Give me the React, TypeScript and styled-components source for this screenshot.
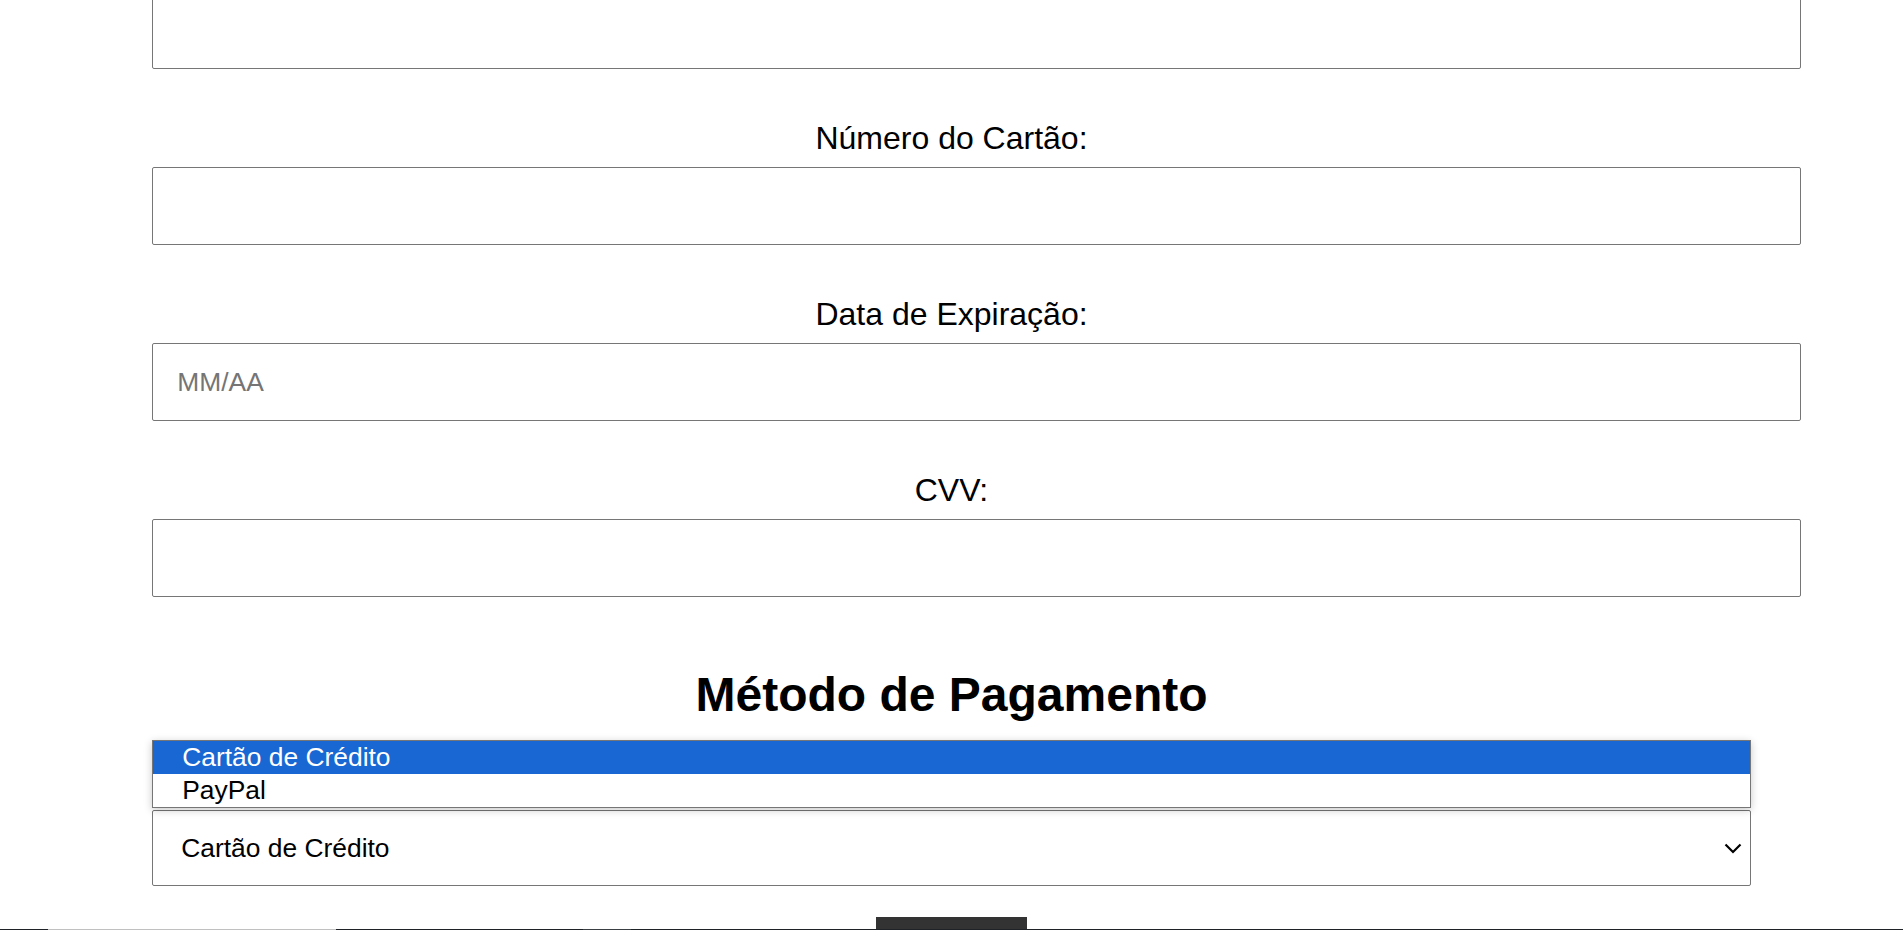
import React from "react";
import styled, { createGlobalStyle } from "styled-components";

const GlobalStyle = createGlobalStyle`
  html, body {
    margin: 0;
    padding: 0;
    background: #ffffff;
    overflow: hidden;
  }
  body {
    font-family: "Liberation Sans", Arial, sans-serif;
    color: #000000;
  }
`;

const Page = styled.div`
  height: 930px;
  overflow: hidden;
`;

const Form = styled.form`
  width: 84%;
  margin: 0 auto;
`;

const Field = styled.div<{ $first?: boolean }>`
  display: flex;
  flex-direction: column;
  margin-top: ${(p) => (p.$first ? "-9px" : "0")};
  margin-bottom: 51px;
`;

const Label = styled.label`
  display: block;
  text-align: center;
  font-size: 32px;
  line-height: 37px;
  margin-bottom: 10px;
`;

const Input = styled.input`
  box-sizing: content-box;
  width: 100%;
  height: 76px;
  padding: 0 24px;
  border: 1px solid #767676;
  border-radius: 2px;
  font-family: "Liberation Sans", Arial, sans-serif;
  font-size: 26.4px;
  color: #000;
  background: #fff;
  outline: none;

  &::placeholder {
    color: #757575;
  }
`;

const Heading = styled.h2`
  margin: 70px 0 88px;
  text-align: center;
  font-size: 48px;
  line-height: 55px;
  font-weight: 700;
`;

const SelectWrap = styled.div`
  position: relative;
`;

const Select = styled.select`
  display: block;
  width: 100%;
  height: 76px;
  padding: 0 24px 0 28px;
  border: 1px solid #767676;
  border-radius: 2px;
  font-family: "Liberation Sans", Arial, sans-serif;
  font-size: 26.4px;
  color: #000;
  background: #fff;
  outline: none;
  appearance: none;
  -webkit-appearance: none;
`;

const Chevron = styled.svg`
  position: absolute;
  right: 9px;
  top: 50%;
  width: 18px;
  height: 11px;
  margin-top: -5px;
  pointer-events: none;
`;

const Popup = styled.div`
  position: absolute;
  left: 0;
  right: 0;
  bottom: calc(100% + 2px);
  border: 1px solid #767676;
  background: #fff;
  box-shadow: 0 2px 8px rgba(0, 0, 0, 0.22);
  display: flex;
  flex-direction: column;
`;

const Option = styled.div<{ $active?: boolean }>`
  height: 33px;
  line-height: 33px;
  padding-left: 29px;
  font-size: 26.4px;
  background: ${(p) => (p.$active ? "#1967d2" : "#ffffff")};
  color: ${(p) => (p.$active ? "#ffffff" : "#000000")};
  white-space: nowrap;
`;

const Submit = styled.button`
  display: block;
  margin: 31px auto 0;
  width: 151px;
  height: 100px;
  padding: 0;
  border: none;
  background: #333333;
  color: #fff;
  font-family: "Liberation Sans", Arial, sans-serif;
  font-size: 20px;
`;

const Taskbar = styled.div`
  position: fixed;
  left: 0;
  right: 0;
  bottom: 0;
  height: 1px;
  display: flex;
  background: #1f2328;
`;

const TaskSeg = styled.div<{ $w: number; $c: string }>`
  width: ${(p) => p.$w}px;
  background: ${(p) => p.$c};
`;

export default function App() {
  return (
    <Page>
      <GlobalStyle />
      <Form onSubmit={(e) => e.preventDefault()}>
        <Field $first>
          <Input type="text" aria-label="Nome no Cartão" />
        </Field>
        <Field>
          <Label htmlFor="numero">Número do Cartão:</Label>
          <Input id="numero" type="text" />
        </Field>
        <Field>
          <Label htmlFor="validade">Data de Expiração:</Label>
          <Input id="validade" type="text" placeholder="MM/AA" />
        </Field>
        <Field>
          <Label htmlFor="cvv">CVV:</Label>
          <Input id="cvv" type="text" />
        </Field>

        <Heading>Método de Pagamento</Heading>

        <SelectWrap>
          <Popup>
            <Option $active>Cartão de Crédito</Option>
            <Option>PayPal</Option>
          </Popup>
          <Select defaultValue="credito">
            <option value="credito">Cartão de Crédito</option>
            <option value="paypal">PayPal</option>
          </Select>
          <Chevron viewBox="0 0 18 11" fill="none">
            <path d="M1.5 1.5 L9 9 L16.5 1.5" stroke="#000" strokeWidth="2.2" />
          </Chevron>
        </SelectWrap>

        <Submit type="submit">Finalizar</Submit>
      </Form>
      <Taskbar>
        <TaskSeg $w={48} $c="#1f2328" />
        <TaskSeg $w={288} $c="#c0c0c0" />
        <TaskSeg $w={247} $c="#1f2328" />
        <TaskSeg $w={48} $c="#3a3f44" />
      </Taskbar>
    </Page>
  );
}
